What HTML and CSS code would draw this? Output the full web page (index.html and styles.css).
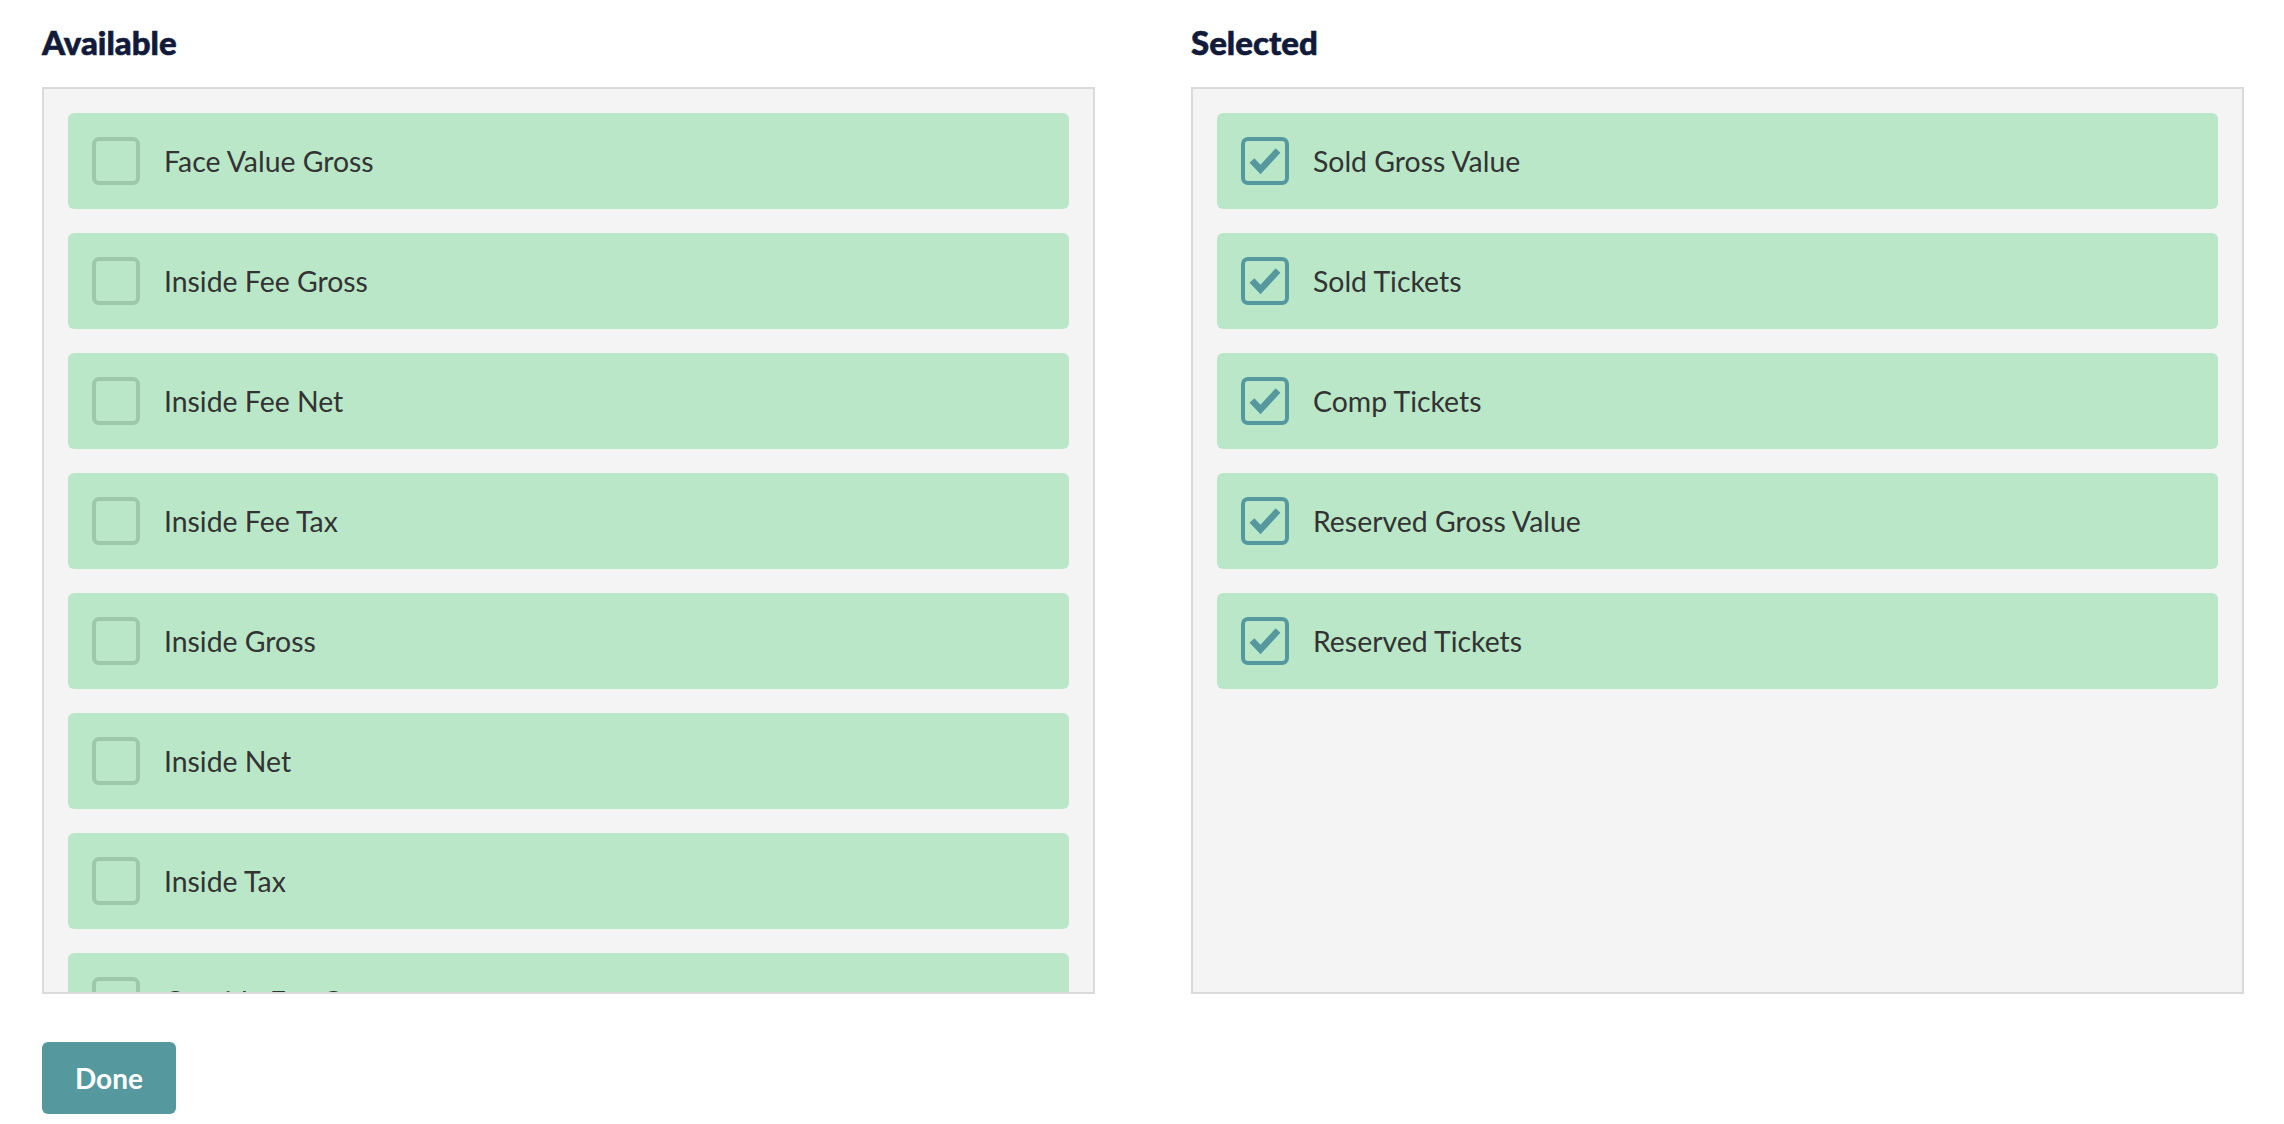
FILE: index.html
```html
<!DOCTYPE html>
<html lang="en">
<head>
<meta charset="utf-8">
<title>Columns</title>
<link rel="stylesheet" href="styles.css">
</head>
<body>
<div class="page">
  <div class="columns">
    <section class="column">
      <h2 class="title">Available</h2>
      <div class="panel">
        <div class="row"><span class="box"></span><span class="label">Face Value Gross</span></div>
        <div class="row"><span class="box"></span><span class="label">Inside Fee Gross</span></div>
        <div class="row"><span class="box"></span><span class="label">Inside Fee Net</span></div>
        <div class="row"><span class="box"></span><span class="label">Inside Fee Tax</span></div>
        <div class="row"><span class="box"></span><span class="label">Inside Gross</span></div>
        <div class="row"><span class="box"></span><span class="label">Inside Net</span></div>
        <div class="row"><span class="box"></span><span class="label">Inside Tax</span></div>
        <div class="row"><span class="box"></span><span class="label">Outside Fee Gross</span></div>
        <div class="row"><span class="box"></span><span class="label">Outside Fee Net</span></div>
      </div>
    </section>
    <section class="column">
      <h2 class="title">Selected</h2>
      <div class="panel">
        <div class="row"><span class="box checked"><svg viewBox="0 0 40 40" class="tick"><polyline points="7,19.5 15.5,28.5 33,9.5"/></svg></span><span class="label">Sold Gross Value</span></div>
        <div class="row"><span class="box checked"><svg viewBox="0 0 40 40" class="tick"><polyline points="7,19.5 15.5,28.5 33,9.5"/></svg></span><span class="label">Sold Tickets</span></div>
        <div class="row"><span class="box checked"><svg viewBox="0 0 40 40" class="tick"><polyline points="7,19.5 15.5,28.5 33,9.5"/></svg></span><span class="label">Comp Tickets</span></div>
        <div class="row"><span class="box checked"><svg viewBox="0 0 40 40" class="tick"><polyline points="7,19.5 15.5,28.5 33,9.5"/></svg></span><span class="label">Reserved Gross Value</span></div>
        <div class="row"><span class="box checked"><svg viewBox="0 0 40 40" class="tick"><polyline points="7,19.5 15.5,28.5 33,9.5"/></svg></span><span class="label">Reserved Tickets</span></div>
      </div>
    </section>
  </div>
  <button class="done" type="button">Done</button>
</div>
</body>
</html>
```

FILE: styles.css
```css
html, body {
  margin: 0;
  padding: 0;
  background: #ffffff;
}

body {
  font-family: Lato, "Noto Sans", "Liberation Sans", sans-serif;
  color: #333333;
}

.page {
  padding: 22px 40px 0 42px;
}

.columns {
  display: grid;
  grid-template-columns: 1fr 1fr;
  column-gap: 96px;
}

.title {
  margin: 0 0 25px 0;
  font-size: 33px;
  line-height: 40px;
  font-weight: 900;
  color: #121a3a;
  -webkit-text-stroke: 0.6px #121a3a;
}

.panel {
  box-sizing: border-box;
  height: 907px;
  border: 2px solid #dadada;
  background: #f4f4f4;
  padding: 24px;
  overflow: hidden;
  display: flex;
  flex-direction: column;
  gap: 24px;
}

.row {
  flex-shrink: 0;
  box-sizing: border-box;
  height: 96px;
  background: #b9e7c8;
  border-radius: 6px;
  padding: 0 24px;
  display: flex;
  align-items: center;
  gap: 24px;
}

.box {
  box-sizing: border-box;
  width: 48px;
  height: 48px;
  flex-shrink: 0;
  border: 4px solid #9dc8a9;
  border-radius: 7px;
  display: flex;
  align-items: center;
  justify-content: center;
}

.box.checked {
  border-color: #55989e;
}

.tick {
  width: 40px;
  height: 40px;
}

.tick polyline {
  fill: none;
  stroke: #55989e;
  stroke-width: 6.5;
  stroke-linecap: butt;
  stroke-linejoin: miter;
  stroke-miterlimit: 10;
}

.label {
  font-size: 28.4px;
  font-weight: 400;
  color: #333333;
  white-space: nowrap;
}

.done {
  margin-top: 48px;
  height: 72px;
  padding: 0 33px;
  border: none;
  border-radius: 6px;
  background: #55999f;
  color: #ffffff;
  font-family: Lato, "Noto Sans", "Liberation Sans", sans-serif;
  font-size: 28px;
  font-weight: 700;
  cursor: pointer;
}
```
